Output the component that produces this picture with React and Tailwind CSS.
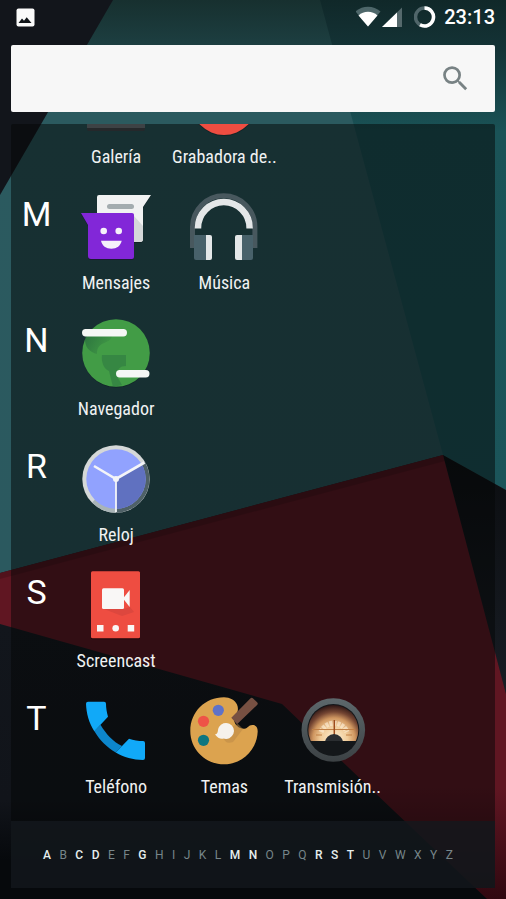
import { useState } from 'react';
import { MdSearch } from 'react-icons/md';

function GaleriaIcon() {
  return (
    <svg viewBox="0 0 72 72" className="size-18" aria-hidden="true">
      <rect x="7" y="8" width="58" height="56" rx="2" fill="#3d4245" />
      <path d="M7 62v1a2 2 0 0 0 2 2h54a2 2 0 0 0 2-2v-1z" fill="#25282b" />
    </svg>
  );
}

function GrabadoraIcon() {
  return (
    <svg viewBox="0 0 72 72" className="size-18" aria-hidden="true">
      <circle cx="36" cy="37" r="33" fill="#0d1d20" opacity="0.6" />
      <circle cx="36" cy="36" r="33" fill="#ee4d41" />
    </svg>
  );
}

function MensajesIcon() {
  return (
    <svg viewBox="0 0 72 72" className="size-18" aria-hidden="true">
      <path d="M19 4h52l-8 12v32a3 3 0 0 1-3 3H19a2 2 0 0 1-2-2V6a2 2 0 0 1 2-2z" fill="#0c1b1e" opacity="0.6" />
      <path d="M19 3h52l-8 12v32a3 3 0 0 1-3 3H19a2 2 0 0 1-2-2V5a2 2 0 0 1 2-2z" fill="#f1f2f2" />
      <path d="M54 24l9 10v13a3 3 0 0 1-3 3h-6z" fill="#d5d8d9" />
      <rect x="27" y="12" width="27" height="5" rx="2.5" fill="#a3acaf" />
      <path d="M1 22h51a2 2 0 0 1 2 2v42a2 2 0 0 1-2 2H11a3 3 0 0 1-3-3V34z" fill="#1c1233" opacity="0.7" />
      <path d="M1 21h51a2 2 0 0 1 2 2v42a2 2 0 0 1-2 2H11a3 3 0 0 1-3-3V33z" fill="#8227d8" />
      <circle cx="23.7" cy="39" r="3.3" fill="#f5f0fa" />
      <circle cx="38.7" cy="39" r="3.3" fill="#f5f0fa" />
      <path d="M21 48.7h20.700c-1 5-5 8-10.300 8s-9.400-3-10.400-8z" fill="#f5f0fa" />
    </svg>
  );
}

function MusicaIcon() {
  return (
    <svg viewBox="0 0 72 72" className="size-18" aria-hidden="true">
      <path d="M4.500 56V35a31.200 31.200 0 0 1 62.400 0v21" fill="none" stroke="#48585e" strokeWidth="5" />
      <path d="M10 36.500V36a25.800 26 0 0 1 51.600 0v.5" fill="none" stroke="#e4e7e8" strokeWidth="6.500" />
      <path d="M6 43h12v25H8a2 2 0 0 1-2-2z" fill="#48616a" />
      <path d="M18 43h4a2 2 0 0 1 2 2v21a2 2 0 0 1-2 2h-4z" fill="#e4e7e8" />
      <path d="M54 43h11v23a2 2 0 0 1-2 2h-9z" fill="#48616a" />
      <path d="M54 43h-5a2 2 0 0 0-2 2v21a2 2 0 0 0 2 2h5z" fill="#e4e7e8" />
    </svg>
  );
}

function NavegadorIcon() {
  return (
    <svg viewBox="0 0 72 72" className="size-18" aria-hidden="true">
      <defs>
        <linearGradient id="navShade" x1="0" y1="0" x2="1" y2="0.4">
          <stop offset="0" stopColor="#1f5b3a" />
          <stop offset="1" stopColor="#1f5b3a" stopOpacity="0.1" />
        </linearGradient>
      </defs>
      <circle cx="36" cy="36" r="33.500" fill="#0d1d20" opacity="0.6" />
      <circle cx="36" cy="35" r="33.800" fill="#429c46" />
      <path d="M5 18h27c-2 9-15 4-15 18C10 34 4 30 5 18z" fill="url(#navShade)" opacity="0.6" />
      <path d="M22 37h24v11c-6 0-10 3-8 12l4 7-9 2-4-16c-5-2-8-9-7-16z" fill="#26683f" opacity="0.4" />
      <rect x="2" y="11" width="45" height="7.500" rx="3.700" fill="#f5f7f5" />
      <rect x="36" y="52" width="33.500" height="7.500" rx="3.700" fill="#f5f7f5" />
    </svg>
  );
}

function RelojIcon() {
  return (
    <svg viewBox="0 0 72 72" className="size-18" aria-hidden="true">
      <circle cx="36" cy="35" r="33.700" fill="#d5d8d8" />
      <path d="M36 35L65 18.200A33.700 33.700 0 0 1 36 68.700z" fill="#4f6167" />
      <path d="M36 35v33.700A33.700 33.700 0 0 1 12 58.500z" fill="#a9b4b7" />
      <circle cx="36" cy="35" r="29.700" fill="#91a2fe" />
      <path d="M36 35l25.700-14.800A29.700 29.700 0 0 1 36 64.700z" fill="#6071c0" />
      <path d="M14 22l22 13 28.500-16.500" fill="none" stroke="#f4f5f8" strokeWidth="2.600" />
      <path d="M36 35v33" stroke="#f4f5f8" strokeWidth="1.800" />
      <circle cx="36" cy="35" r="3" fill="#f4f5f8" />
    </svg>
  );
}

function ScreencastIcon() {
  return (
    <svg viewBox="0 0 72 72" className="size-18" aria-hidden="true">
      <rect x="11" y="2.300" width="49" height="67" rx="1.500" fill="#1d0608" />
      <rect x="11" y="1.300" width="49" height="67" rx="1.500" fill="#ee4d41" />
      <path d="M24 39h20l6-2 4 5-12 4z" fill="#c43f39" opacity="0.4" />
      <rect x="22" y="18.300" width="22" height="20.700" rx="1.500" fill="#f9f7f6" />
      <path d="M43 28.500l6.700-8.500v17z" fill="#f9f7f6" />
      <rect x="17" y="55" width="6.500" height="6.500" fill="#f9f7f6" />
      <circle cx="35.700" cy="58.300" r="3.300" fill="#f9f7f6" />
      <rect x="47.700" y="55" width="6.500" height="6.500" fill="#f9f7f6" />
    </svg>
  );
}

function TelefonoIcon() {
  return (
    <svg viewBox="0 0 72 72" className="size-18" aria-hidden="true">
      <path d="M20.500 28.700C26 38 33 45.500 42 50l-6.300 6.500C27 51.500 19.500 44 14.300 35z" fill="#0d86cc" />
      <path d="M8 5.700h16a2 2 0 0 1 2 2c0 4 .7 8.300 2 13l-7.500 8-6.200 6.500C9 27 6.300 17 6 7.700a2 2 0 0 1 2-2z" fill="#11a9f8" />
      <path d="M42 50l7-7.300c4.500 1.500 9.500 2.300 14 2.300a2 2 0 0 1 2 2v15a2 2 0 0 1-2 2c-10-.2-19-2.500-27.300-7.500z" fill="#11a9f8" />
    </svg>
  );
}

function TemasIcon() {
  return (
    <svg viewBox="0 0 72 72" className="size-18" aria-hidden="true">
      <path
        d="M36 1.300c6 0 11 3 13 7.200 2 5 .5 8.500-2 12.500-3 5 3 12 9.300 11.700 4-.5 4-3.700 8-3.700 4.700 0 5.400 3.500 5.400 6.500C69 54 54 68.300 36 68.300S2.300 54 2.300 35 17 1.300 36 1.300z"
        fill="#dca34f"
      />
      <path d="M45 30l5-2 5 5-10 13c-5 2-8 0-9-3z" fill="#b98845" opacity="0.5" />
      <circle cx="30.300" cy="14.300" r="5.600" fill="#5f72c8" />
      <circle cx="15.500" cy="25.300" r="5.600" fill="#ee5347" />
      <circle cx="15.500" cy="44.300" r="5.600" fill="#0e7680" />
      <path d="M43.300 21.700L62.300 2.500a2 2 0 0 1 2.800 0l4 3.700a2 2 0 0 1 0 2.800L49 28.300z" fill="#775042" />
      <path d="M27 38.500c4-1 2-4 4-7.500a8 8 0 1 1 4.500 11.500c-3 .7-6-.5-8.500-4z" fill="#f6f2ec" />
    </svg>
  );
}

function TransmisionIcon() {
  return (
    <svg viewBox="0 0 72 72" className="size-18" aria-hidden="true">
      <defs>
        <radialGradient id="dialGlow" gradientUnits="userSpaceOnUse" cx="37" cy="43" r="34">
          <stop offset="0" stopColor="#fff2d8" />
          <stop offset="0.400" stopColor="#f0cb98" />
          <stop offset="0.620" stopColor="#cf9660" />
          <stop offset="0.800" stopColor="#744532" />
          <stop offset="1" stopColor="#2a1414" />
        </radialGradient>
        <linearGradient id="dialRim" x1="0" y1="0" x2="0" y2="1">
          <stop offset="0" stopColor="#5d686c" />
          <stop offset="1" stopColor="#3c4144" />
        </linearGradient>
        <clipPath id="dialTop">
          <rect x="0" y="0" width="72" height="45" />
        </clipPath>
      </defs>
      <circle cx="36.300" cy="34" r="31.800" fill="url(#dialRim)" />
      <circle cx="36.300" cy="34" r="26" fill="#14171a" />
      <g clipPath="url(#dialTop)">
        <circle cx="36.300" cy="34" r="25" fill="url(#dialGlow)" />
        <path d="M24 36a14 14 0 0 1 26 0" fill="none" stroke="#fdf0dc" strokeWidth="5" strokeDasharray="3 1" opacity="0.6" />
        <path d="M15 33.500h43M19 39h6M49 39h6" stroke="#c07f45" strokeWidth="1" />
        <path d="M37.300 24v15" stroke="#9c4a1c" strokeWidth="1.500" />
        <circle cx="37" cy="47" r="9" fill="#2b2e31" />
      </g>
    </svg>
  );
}

const sections = [
  {
    letter: '',
    apps: [
      { name: 'Galería', Icon: GaleriaIcon },
      { name: 'Grabadora de..', Icon: GrabadoraIcon },
    ],
  },
  {
    letter: 'M',
    apps: [
      { name: 'Mensajes', Icon: MensajesIcon },
      { name: 'Música', Icon: MusicaIcon },
    ],
  },
  { letter: 'N', apps: [{ name: 'Navegador', Icon: NavegadorIcon }] },
  { letter: 'R', apps: [{ name: 'Reloj', Icon: RelojIcon }] },
  { letter: 'S', apps: [{ name: 'Screencast', Icon: ScreencastIcon }] },
  {
    letter: 'T',
    apps: [
      { name: 'Teléfono', Icon: TelefonoIcon },
      { name: 'Temas', Icon: TemasIcon },
      { name: 'Transmisión..', Icon: TransmisionIcon },
    ],
  },
];

const alphabet = 'ABCDEFGHIJKLMNOPQRSTUVWXYZ'.split('');
const activeLetters = 'ACDGMNRST';

function Wallpaper() {
  return (
    <svg viewBox="0 0 506 899" preserveAspectRatio="none" className="absolute inset-0 -z-10 h-full w-full" aria-hidden="true">
      <defs>
        <linearGradient id="teal" x1="0" y1="0" x2="0" y2="1">
          <stop offset="0" stopColor="#17302f" />
          <stop offset="0.070" stopColor="#1c3d3f" />
          <stop offset="0.200" stopColor="#2b5a5f" />
          <stop offset="1" stopColor="#2b595f" />
        </linearGradient>
        <linearGradient id="tealDark" x1="0" y1="0" x2="0" y2="1">
          <stop offset="0" stopColor="#102829" />
          <stop offset="0.100" stopColor="#143336" />
          <stop offset="0.270" stopColor="#1a5357" />
          <stop offset="1" stopColor="#1b555a" />
        </linearGradient>
        <linearGradient id="red" x1="0" y1="0" x2="0" y2="1">
          <stop offset="0" stopColor="#601622" />
          <stop offset="0.750" stopColor="#601622" />
          <stop offset="1" stopColor="#300810" />
        </linearGradient>
        <linearGradient id="night" gradientUnits="userSpaceOnUse" x1="0" y1="620" x2="0" y2="860">
          <stop offset="0" stopColor="#12161c" />
          <stop offset="0.750" stopColor="#11141a" />
          <stop offset="1" stopColor="#06090c" />
        </linearGradient>
        <linearGradient id="nightRight" x1="0" y1="0" x2="0" y2="1">
          <stop offset="0" stopColor="#0b0d10" />
          <stop offset="1" stopColor="#181d24" />
        </linearGradient>
      </defs>
      <rect width="506" height="899" fill="url(#night)" />
      <path d="M0 0h506v500L443 455 0 573z" fill="url(#teal)" />
      <path d="M320 0h186v490l-63-35z" fill="url(#tealDark)" />
      <path d="M0 0h113L0 195z" fill="#12151b" />
      <path d="M443 455l63 35v204z" fill="url(#nightRight)" />
      <path d="M0 573l443-118 63 239v205h-19l-94-89-111-106L0 624z" fill="url(#red)" />
      <path d="M0 573l443-118 2 6L0 579z" fill="#000" opacity="0.150" />
    </svg>
  );
}

function StatusBar() {
  return (
    <header className="flex h-[34px] shrink-0 items-center pl-4 pr-[11px] text-white">
      <svg viewBox="0 0 19 19" className="size-[19px]" aria-hidden="true">
        <rect x="0.500" y="0.500" width="18" height="18" rx="2" fill="#fafafa" />
        <path d="M2.500 15l3.500-4.500 2 2.300 2.700-3.600 4.800 5.800z" fill="#101418" />
      </svg>
      <svg viewBox="0 0 50 22" className="ml-auto h-[22px] w-[50px]" aria-hidden="true">
        <path d="M-0.500 5.500a19 19 0 0 1 25 0L12 20.500z" fill="#4e676a" />
        <path d="M2.500 9.500a14 14 0 0 1 19 0L12 20.500z" fill="#fff" />
        <path d="M26 21L46 1.500V21z" fill="#55696c" />
        <path d="M26 21L41 6.500V21z" fill="#fff" />
      </svg>
      <svg viewBox="0 0 22 22" className="ml-2 size-[22px]" aria-hidden="true">
        <circle cx="10.500" cy="11" r="9" fill="none" stroke="#50666a" strokeWidth="3.500" />
        <path d="M10.500 2a9 9 0 1 1-4.500 16.800" fill="none" stroke="#fff" strokeWidth="3.500" />
      </svg>
      <time className="ml-2 text-xl leading-6 font-medium">23:13</time>
    </header>
  );
}

function AppRow({ letter, apps }) {
  return (
    <section className="flex shrink-0 pt-2 pb-4">
      <h2 className="w-[51px] shrink-0 pt-1 text-center text-[34px] leading-9 text-white">{letter}</h2>
      <div className="grid flex-1 grid-cols-4">
        {apps.map(({ name, Icon }) => (
          <button key={name} type="button" className="flex flex-col items-center gap-2">
            <Icon />
            <span className="font-['Roboto_Condensed','Liberation_Sans_Narrow',Roboto,sans-serif] text-lg leading-[22px] whitespace-nowrap text-[#f0f2f2]">
              {name}
            </span>
          </button>
        ))}
      </div>
    </section>
  );
}

export default function App() {
  const [query, setQuery] = useState('');

  return (
    <div className="relative isolate flex h-screen flex-col overflow-hidden font-['Roboto',sans-serif]">
      <Wallpaper />
      <StatusBar />

      {/* Search */}
      <form className="mx-[11px] mt-[11px] flex h-[67px] shrink-0 items-center rounded-xs bg-[#f7f7f7] pr-[23px] pl-5" onSubmit={(e) => e.preventDefault()}>
        <input
          type="search"
          aria-label="Buscar aplicaciones"
          value={query}
          onChange={(e) => setQuery(e.target.value)}
          className="h-full min-w-0 flex-1 bg-transparent text-xl text-gray-800 outline-none"
        />
        <button type="submit" aria-label="Buscar" className="text-[#788284]">
          <MdSearch className="size-[33px]" />
        </button>
      </form>

      {/* App list, scrolled to the end */}
      <main className="mx-[11px] mt-3 flex min-h-0 flex-1 flex-col justify-end overflow-hidden rounded-t-xs bg-[#040506]/50 pb-[7px]">
        {sections.map((s) => (
          <AppRow key={s.letter} letter={s.letter} apps={s.apps} />
        ))}
      </main>

      {/* Alphabet scrubber */}
      <nav className="mx-[11px] mb-[11px] flex h-[67px] shrink-0 items-center justify-between bg-[#12161b]/90 pr-[42px] pl-8 text-xs">
        {alphabet.map((l) => (
          <button key={l} type="button" className={activeLetters.includes(l) ? 'font-medium text-[#e6eeee]' : 'text-[#77868a]'}>
            {l}
          </button>
        ))}
      </nav>
    </div>
  );
}
